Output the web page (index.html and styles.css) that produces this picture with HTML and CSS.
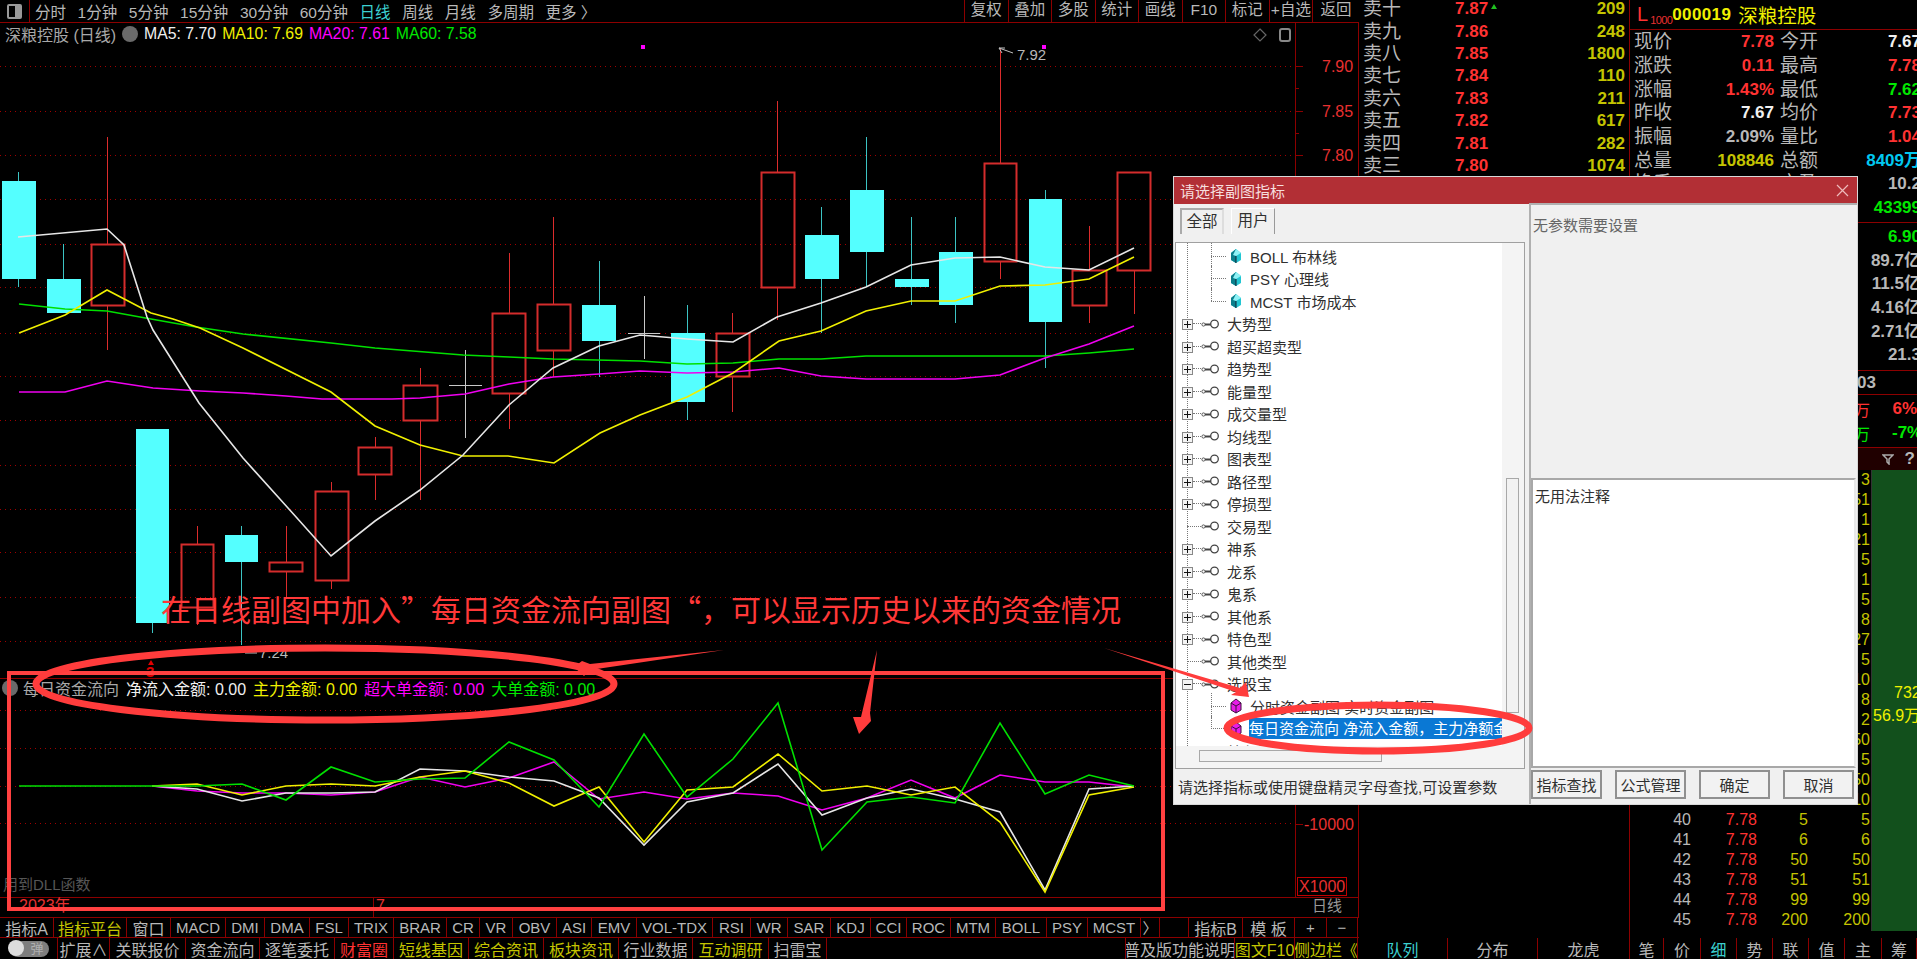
FILE: index.html
```html
<!DOCTYPE html>
<html lang="zh-CN">
<head>
    <meta charset="UTF-8">
    <title>深粮控股 日线</title>
    <link rel="stylesheet" href="styles.css">
</head>
<body>
    <!-- icons used by the tree -->
    <svg class="defs" width="0" height="0">
        <symbol id="key" viewBox="0 0 18 10">
            <circle cx="2.5" cy="5.5" r="1.6" fill="none" stroke="#555" stroke-width="1"/>
            <path d="M4 5.5h6" stroke="#444" stroke-width="2" fill="none"/>
            <circle cx="13.5" cy="5" r="3.8" stroke="#444" stroke-width="1.3" fill="#fff"/>
        </symbol>
        <symbol id="gem-cyan" viewBox="0 0 12 16">
            <path d="M6 1l5 4v7l-5 3-5-3V5z" fill="#22c6d2"/>
            <path d="M6 1L1 5v7l5 3z" fill="#0b7f8c"/>
            <path d="M6 1l5 4-5 3-3-1z" fill="#8ff2f6"/>
            <path d="M6 8v7" stroke="#123" stroke-width="1"/>
        </symbol>
        <symbol id="gem-pink" viewBox="0 0 12 16">
            <path d="M6 1l5 4v7l-5 3-5-3V5z" fill="#e81ce8" stroke="#401040" stroke-width="1"/>
            <path d="M1 5l5 3 5-3M6 8v7" stroke="#401040" stroke-width="1" fill="none"/>
        </symbol>
    </svg>

    <div class="workspace">
        <!-- left: chart -->
        <div class="chart-col">
            <div class="toolbar">
                <div class="panel-btn"><span class="panel-icon"></span></div>
                <div class="periods">
                    <span>分时</span><span>1分钟</span><span>5分钟</span><span>15分钟</span><span>30分钟</span><span>60分钟</span>
                    <span class="cyan">日线</span><span>周线</span><span>月线</span><span>多周期</span><span>更多 〉</span>
                </div>
                <div class="tools">
                    <span>复权</span><span>叠加</span><span>多股</span><span>统计</span><span>画线</span><span>F10</span><span>标记</span><span>+自选</span><span class="back">返回</span>
                </div>
            </div>

            <div class="chart">
                <svg class="chart-svg" width="1359" height="894" viewBox="0 23 1359 894">
                    <g class="grid">
                        <path d="M0 66.5H1295M0 111.5H1295M0 155.5H1295M0 199.5H1295M0 244.5H1295M0 287.5H1295M0 333.5H1295M0 376.5H1295M0 420.5H1295M0 465.5H1295M0 509.5H1295M0 552.5H1295M0 597.5H1295M0 641.5H1295"/>
                        <path d="M0 710.5H1295M0 748.5H1295M0 786.5H1295M0 823.5H1295"/>
                    </g>
                    <path class="frame" d="M1295.5 23V897M1358.5 0V917M0 678.5H1295M0 897.5H1359M373.5 897V917M1295 66.5h8M1295 88.5h4M1295 111.5h8M1295 133.5h4M1295 155.5h8M1295 824.5h8"/>

                    <!-- candles -->
                    <path class="wick-red" d="M107.5 137V244M107.5 305V350M197.5 526V544M197.5 607V625M286.5 526V562M286.5 571V597M331.5 482V491M331.5 580V589M375.5 437V447M375.5 474V500M420.5 368V385M420.5 420V500M509.5 253V313M509.5 393V429M553.5 217V304M553.5 350V377M732.5 313V333M732.5 376V412M777.5 101V172M777.5 287V320M1000.5 48V163M1000.5 261V279M1089.5 226V270M1089.5 305V323M1134.5 270V314"/>
                    <path class="wick-cyan" d="M18.5 172V181M18.5 279V287M63.5 244V279M152.5 623V633M241.5 526V535M241.5 562V645M599.5 261V305M599.5 341V377M687.5 305V333M687.5 402V420M821.5 207V235M821.5 279V333M866.5 137V190M866.5 252V287M911.5 217V279M911.5 287V305M955.5 217V252M955.5 305V323M1045.5 190V199M1045.5 322V368"/>
                    <path class="wick-white" d="M465.5 350V438M449 385.5H482M644.5 296V359M628 333.5H660"/>
                    <g class="body-cyan">
                        <rect x="2" y="181" width="34" height="98"/>
                        <rect x="47" y="279" width="34" height="34"/>
                        <rect x="136" y="429" width="33" height="194"/>
                        <rect x="225" y="535" width="33" height="27"/>
                        <rect x="582" y="305" width="34" height="36"/>
                        <rect x="671" y="333" width="34" height="69"/>
                        <rect x="805" y="235" width="34" height="44"/>
                        <rect x="850" y="190" width="34" height="62"/>
                        <rect x="895" y="279" width="34" height="8"/>
                        <rect x="939" y="252" width="34" height="53"/>
                        <rect x="1029" y="199" width="33" height="123"/>
                    </g>
                    <g class="body-red">
                        <rect x="91.5" y="244.5" width="33" height="61"/>
                        <rect x="181.5" y="544.5" width="32" height="63"/>
                        <rect x="269.5" y="562.5" width="33" height="9"/>
                        <rect x="315.5" y="491.5" width="33" height="89"/>
                        <rect x="358.5" y="447.5" width="33" height="27"/>
                        <rect x="403.5" y="385.5" width="34" height="35"/>
                        <rect x="492.5" y="313.5" width="33" height="80"/>
                        <rect x="537.5" y="304.5" width="33" height="46"/>
                        <rect x="716.5" y="333.5" width="33" height="43"/>
                        <rect x="761.5" y="172.5" width="33" height="115"/>
                        <rect x="984.5" y="163.5" width="32" height="98"/>
                        <rect x="1072.5" y="270.5" width="34" height="35"/>
                        <rect x="1117.5" y="172.5" width="33" height="98"/>
                    </g>

                    <!-- moving averages -->
                    <polyline class="line green" points="19,304 65,309 107,311 151,319 196,327 243,334 331,343 375,348 463,355 509,357 553,359 640,361 687,364 733,363 779,359 821,359 866,356 1045,356 1089,353 1134,349"/>
                    <polyline class="line pink" points="19,392 65,392 107,381 153,388 200,391 243,393 286,396 322,399 392,399 420,398 465,394 509,384 553,377 599,374 640,371 687,373 733,372 779,368 821,376 866,379 955,379 1000,375 1045,358 1089,344 1134,326"/>
                    <polyline class="line yellow" points="19,333 65,315 107,290 151,313 173,319 200,328 243,348 331,392 375,426 420,445 463,456 508,456 554,463 600,433 640,415 687,397 733,373 779,341 821,331 866,311 911,301 955,301 1000,286 1045,285 1089,279 1134,257"/>
                    <polyline class="line white" points="18,237 107,229 124,245 147,317 153,330 199,403 243,458 288,508 331,556 375,521 420,490 463,455 509,405 553,368 599,346 640,335 687,339 733,342 777,317 821,303 866,287 911,265 955,258 1000,257 1045,267 1089,270 1134,248"/>

                    <!-- sub chart lines -->
                    <polyline class="line pink" points="152,786 197,791 242,793 286,793 331,795 375,792 420,777 465,787 509,778 554,762 599,799 644,792 687,799 733,793 778,796 822,810 867,798 911,780 955,798 1000,775 1045,782 1089,782 1134,787"/>
                    <polyline class="line white" points="152,786 197,789 242,801 286,793 331,793 375,792 420,769 465,771 509,777 554,781 599,798 644,845 687,802 733,793 778,764 822,815 867,798 911,789 955,799 1000,812 1045,890 1089,789 1134,786"/>
                    <polyline class="line yellow" points="152,786 197,784 242,795 286,786 331,784 375,786 420,777 465,771 509,783 554,806 599,787 644,842 687,790 733,787 778,754 822,791 867,786 911,795 955,787 1000,822 1045,892 1089,795 1134,787"/>
                    <polyline class="line green" points="19,786 197,786 242,784 286,800 331,767 375,782 420,779 465,778 509,742 554,760 599,807 644,734 687,797 733,759 778,703 822,850 867,802 911,797 955,803 1000,723 1045,794 1089,775 1134,786"/>

                    <!-- marks on the chart -->
                    <rect class="dot" x="641" y="45" width="4" height="4"/>
                    <rect class="dot" x="1042" y="45" width="4" height="4"/>
                    <path class="callout" d="M1013 53L999 48M999 48l6 0M999 48l3 5"/>
                    <text class="price-note" x="1017" y="60">7.92</text>
                    <path class="callout" d="M257 653H245"/>
                    <text class="price-note" x="259" y="658">7.24</text>
                    <path class="marker" d="M151 660l3 5h-6z"/>
                    <text class="marker-num" x="146" y="677">3</text>
                    <path class="diamond" d="M1260 29l6 6-6 6-6-6z"/>
                    <rect class="side-icon" x="1280" y="29" width="10" height="12" rx="2"/>

                    <text class="axis" x="1322" y="72">7.90</text>
                    <text class="axis" x="1322" y="117">7.85</text>
                    <text class="axis" x="1322" y="161">7.80</text>
                    <text class="axis" x="1304" y="830">-10000</text>
                    <rect class="x-box" x="1297.5" y="877.5" width="49" height="18"/>
                    <text class="axis" x="1299" y="892">X1000</text>
                    <text class="axis dim" x="1312" y="911">日线</text>
                    <text class="axis" x="19" y="911">2023年</text>
                    <text class="axis" x="376" y="911">7</text>
                    <text class="dll-note" x="3" y="890">用到DLL函数</text>
                </svg>

                <div class="legend main-legend">
                    <span class="stock-name">深粮控股 (日线)</span>
                    <span class="round-btn"></span>
                    <span class="white">MA5: 7.70</span>
                    <span class="yellow">MA10: 7.69</span>
                    <span class="pink">MA20: 7.61</span>
                    <span class="green">MA60: 7.58</span>
                </div>
                <div class="legend sub-legend">
                    <span class="round-btn"></span>
                    <span class="stock-name">每日资金流向</span>
                    <span class="white">净流入金额: 0.00</span>
                    <span class="yellow">主力金额: 0.00</span>
                    <span class="pink">超大单金额: 0.00</span>
                    <span class="green">大单金额: 0.00</span>
                </div>
            </div>

            <div class="tabs-row indicator-tabs">
                <span class="cjk">指标A</span><span class="cjk olive">指标平台</span><span class="cjk">窗口</span><span>MACD</span><span>DMI</span><span>DMA</span><span>FSL</span><span>TRIX</span><span>BRAR</span><span>CR</span><span>VR</span><span>OBV</span><span>ASI</span><span>EMV</span><span>VOL-TDX</span><span>RSI</span><span>WR</span><span>SAR</span><span>KDJ</span><span>CCI</span><span>ROC</span><span>MTM</span><span>BOLL</span><span>PSY</span><span>MCST</span><span>〉</span><span></span><span class="cjk">指标B</span><span class="cjk">模 板</span><span>+</span><span>−</span>
            </div>
        </div>

        <!-- middle: order book -->
        <div class="book-col">
            <div class="ask-row"><span>卖十</span><b class="red">7.87<i class="up-mark"></i></b><b class="olive">209</b></div>
            <div class="ask-row"><span>卖九</span><b class="red">7.86</b><b class="olive">248</b></div>
            <div class="ask-row"><span>卖八</span><b class="red">7.85</b><b class="olive">1800</b></div>
            <div class="ask-row"><span>卖七</span><b class="red">7.84</b><b class="olive">110</b></div>
            <div class="ask-row"><span>卖六</span><b class="red">7.83</b><b class="olive">211</b></div>
            <div class="ask-row"><span>卖五</span><b class="red">7.82</b><b class="olive">617</b></div>
            <div class="ask-row"><span>卖四</span><b class="red">7.81</b><b class="olive">282</b></div>
            <div class="ask-row"><span>卖三</span><b class="red">7.80</b><b class="olive">1074</b></div>
        </div>

        <!-- right: quote panel -->
        <div class="quote-col">
            <div class="quote-head">
                <span class="l-mark">L</span><span class="l-size">1000</span>
                <b class="code">000019</b><span class="name">深粮控股</span>
            </div>
            <div class="quote-block first">
                <div class="quote-row"><span>现价</span><b class="red">7.78</b><span>今开</span><b class="white">7.67</b></div>
                <div class="quote-row"><span>涨跌</span><b class="red">0.11</b><span>最高</span><b class="red">7.78</b></div>
                <div class="quote-row"><span>涨幅</span><b class="red">1.43%</b><span>最低</span><b class="green">7.62</b></div>
                <div class="quote-row"><span>昨收</span><b class="white">7.67</b><span>均价</span><b class="red">7.73</b></div>
                <div class="quote-row"><span>振幅</span><b>2.09%</b><span>量比</span><b class="red">1.04</b></div>
                <div class="quote-row"><span>总量</span><b class="olive">108846</b><span>总额</span><b class="blue">8409万</b></div>
                <div class="quote-row"><span>换手</span><b></b><span>市盈</span><b>10.2</b></div>
                <div class="quote-row"><span></span><b></b><span></span><b class="green">43399</b></div>
            </div>
            <div class="quote-block second">
                <div class="quote-row"><span></span><b></b><span></span><b class="green">6.90</b></div>
                <div class="quote-row"><span></span><b></b><span></span><b>89.7亿</b></div>
                <div class="quote-row"><span></span><b></b><span></span><b>11.5亿</b></div>
                <div class="quote-row"><span></span><b></b><span></span><b>4.16亿</b></div>
                <div class="quote-row"><span></span><b></b><span></span><b>2.71亿</b></div>
                <div class="quote-row"><span></span><b></b><span></span><b>21.3</b></div>
            </div>
            <div class="time-row"><b>1003</b></div>
            <div class="quote-block third">
                <div class="flow-row"><span class="red">100万</span><b class="red">6%</b></div>
                <div class="flow-row"><span class="green">100万</span><b class="green">-7%</b></div>
            </div>
            <div class="filter-bar">
                <svg width="12" height="12" viewBox="0 0 12 12"><path d="M1 2h10L7 6v5L5 9V6z" fill="none" stroke="#aaa" stroke-width="1.5"/></svg>
                <b>?</b>
            </div>
            <div class="tick-area">
                <div class="ticks">
                    <div class="tick"><span></span><span></span><span></span><span class="olive">3</span></div>
                    <div class="tick"><span></span><span></span><span></span><span class="olive">51</span></div>
                    <div class="tick"><span></span><span></span><span></span><span class="olive">1</span></div>
                    <div class="tick"><span></span><span></span><span></span><span class="olive">21</span></div>
                    <div class="tick"><span></span><span></span><span></span><span class="olive">5</span></div>
                    <div class="tick"><span></span><span></span><span></span><span class="olive">1</span></div>
                    <div class="tick"><span></span><span></span><span></span><span class="olive">5</span></div>
                    <div class="tick"><span></span><span></span><span></span><span class="olive">8</span></div>
                    <div class="tick"><span></span><span></span><span></span><span class="olive">27</span></div>
                    <div class="tick"><span></span><span></span><span></span><span class="olive">5</span></div>
                    <div class="tick"><span></span><span></span><span></span><span class="olive">10</span></div>
                    <div class="tick"><span></span><span></span><span></span><span class="olive">8</span></div>
                    <div class="tick"><span></span><span></span><span></span><span class="olive">2</span></div>
                    <div class="tick"><span></span><span></span><span></span><span class="olive">50</span></div>
                    <div class="tick"><span></span><span></span><span></span><span class="olive">5</span></div>
                    <div class="tick"><span></span><span></span><span></span><span class="olive">50</span></div>
                    <div class="tick"><span></span><span></span><span></span><span class="olive">10</span></div>
                    <div class="tick"><span>40</span><span class="red">7.78</span><span class="olive">5</span><span class="olive">5</span></div>
                    <div class="tick"><span>41</span><span class="red">7.78</span><span class="olive">6</span><span class="olive">6</span></div>
                    <div class="tick"><span>42</span><span class="red">7.78</span><span class="olive">50</span><span class="olive">50</span></div>
                    <div class="tick"><span>43</span><span class="red">7.78</span><span class="olive">51</span><span class="olive">51</span></div>
                    <div class="tick"><span>44</span><span class="red">7.78</span><span class="olive">99</span><span class="olive">99</span></div>
                    <div class="tick"><span>45</span><span class="red">7.78</span><span class="olive">200</span><span class="olive">200</span></div>
                </div>
                <div class="depth-panel">
                    <span class="depth-num">732</span>
                    <span class="depth-sum">56.9万</span>
                </div>
            </div>
        </div>
    </div>

    <!-- bottom row -->
    <div class="tabs-row status-tabs">
        <span class="toggle"><i class="knob"></i><em>弹</em></span><span>扩展∧</span><span>关联报价</span><span>资金流向</span><span>逐笔委托</span><span class="red">财富圈</span><span class="olive">短线基因</span><span class="olive">综合资讯</span><span class="olive">板块资讯</span><span>行业数据</span><span class="olive">互动调研</span><span>扫雷宝</span><span></span><span>普及版功能说明</span><span class="olive">图文F10</span><span class="olive">侧边栏《</span><span class="cyan">队列</span><span>分布</span><span>龙虎</span><span>笔</span><span>价</span><span class="cyan">细</span><span>势</span><span>联</span><span>值</span><span>主</span><span>筹</span>
    </div>

    <!-- indicator dialog -->
    <div class="dialog">
        <div class="dialog-title">
            <span>请选择副图指标</span>
            <svg width="13" height="13" viewBox="0 0 13 13"><path d="M1 1l11 11M12 1L1 12" stroke="#eebbbb" stroke-width="1.2"/></svg>
        </div>
        <div class="dialog-body">
            <div class="dialog-left">
                <div class="dialog-tabs">
                    <span class="dialog-tab active">全部</span>
                    <span class="dialog-tab">用户</span>
                </div>
                <div class="tree-box">
                    <div class="tree-top">
                        <div class="tree-list">
                            <div class="leaf"><i class="stub"></i><svg class="gem"><use href="#gem-cyan"/></svg><span>BOLL 布林线</span></div>
                            <div class="leaf"><i class="stub"></i><svg class="gem"><use href="#gem-cyan"/></svg><span>PSY 心理线</span></div>
                            <div class="leaf last"><i class="stub"></i><svg class="gem"><use href="#gem-cyan"/></svg><span>MCST 市场成本</span></div>
                            <div class="group"><i class="exp plus"></i><i class="dash"></i><svg class="key"><use href="#key"/></svg><span>大势型</span></div>
                            <div class="group"><i class="exp plus"></i><i class="dash"></i><svg class="key"><use href="#key"/></svg><span>超买超卖型</span></div>
                            <div class="group"><i class="exp plus"></i><i class="dash"></i><svg class="key"><use href="#key"/></svg><span>趋势型</span></div>
                            <div class="group"><i class="exp plus"></i><i class="dash"></i><svg class="key"><use href="#key"/></svg><span>能量型</span></div>
                            <div class="group"><i class="exp plus"></i><i class="dash"></i><svg class="key"><use href="#key"/></svg><span>成交量型</span></div>
                            <div class="group"><i class="exp plus"></i><i class="dash"></i><svg class="key"><use href="#key"/></svg><span>均线型</span></div>
                            <div class="group"><i class="exp plus"></i><i class="dash"></i><svg class="key"><use href="#key"/></svg><span>图表型</span></div>
                            <div class="group"><i class="exp plus"></i><i class="dash"></i><svg class="key"><use href="#key"/></svg><span>路径型</span></div>
                            <div class="group"><i class="exp plus"></i><i class="dash"></i><svg class="key"><use href="#key"/></svg><span>停损型</span></div>
                            <div class="group nobox"><i class="dash wide"></i><svg class="key"><use href="#key"/></svg><span>交易型</span></div>
                            <div class="group"><i class="exp plus"></i><i class="dash"></i><svg class="key"><use href="#key"/></svg><span>神系</span></div>
                            <div class="group"><i class="exp plus"></i><i class="dash"></i><svg class="key"><use href="#key"/></svg><span>龙系</span></div>
                            <div class="group"><i class="exp plus"></i><i class="dash"></i><svg class="key"><use href="#key"/></svg><span>鬼系</span></div>
                            <div class="group"><i class="exp plus"></i><i class="dash"></i><svg class="key"><use href="#key"/></svg><span>其他系</span></div>
                            <div class="group"><i class="exp plus"></i><i class="dash"></i><svg class="key"><use href="#key"/></svg><span>特色型</span></div>
                            <div class="group nobox"><i class="dash wide"></i><svg class="key"><use href="#key"/></svg><span>其他类型</span></div>
                            <div class="group"><i class="exp"></i><i class="dash"></i><svg class="key"><use href="#key"/></svg><span>选股宝</span></div>
                            <div class="leaf"><i class="stub"></i><svg class="gem"><use href="#gem-pink"/></svg><span>分时资金副图 实时资金副图</span></div>
                            <div class="leaf last selected"><i class="stub"></i><svg class="gem"><use href="#gem-pink"/></svg><span>每日资金流向 净流入金额，主力净额金额</span></div>
                            <div class="group"><i class="exp plus"></i><i class="dash"></i><svg class="key"><use href="#key"/></svg><span>特色指标</span></div>
                        </div>
                        <div class="vscroll"><div class="vthumb"></div></div>
                    </div>
                    <div class="hscroll"><div class="hthumb"></div></div>
                </div>
                <div class="dialog-status">请选择指标或使用键盘精灵字母查找,可设置参数</div>
            </div>
            <div class="dialog-right">
                <div class="params">无参数需要设置</div>
                <div class="notes">无用法注释</div>
                <div class="dialog-buttons">
                    <button>指标查找</button>
                    <button>公式管理</button>
                    <button>确定</button>
                    <button>取消</button>
                </div>
            </div>
        </div>
    </div>

    <!-- red marks drawn on top of the screenshot -->
    <svg class="marks" width="1917" height="959" viewBox="0 0 1917 959">
        <rect class="mark-rect" x="9" y="673" width="1154" height="236"/>
        <ellipse class="mark-oval" cx="325" cy="684" rx="289" ry="36"/>
        <ellipse class="mark-oval" cx="1378" cy="728" rx="151" ry="23"/>
        <polygon class="mark-arrow" points="724,650 590,670 584,676 574,667 582,661 590,664"/>
        <polygon class="mark-arrow" points="877,650 870,713 871,721 859,734 853,717 861,717"/>
        <polygon class="mark-arrow" points="1104,648 1240,688 1246,682 1249,697 1231,695 1236,692"/>
    </svg>
    <div class="mark-text">在日线副图中加入”每日资金流向副图“，可以显示历史以来的资金情况</div>
</body>
</html>
```

FILE: styles.css
```css
body {
    margin: 0;
    width: 1917px;
    height: 959px;
    overflow: hidden;
    position: relative;
    background-color: #000;
    color: #b8b8b8;
    font-family: "Liberation Sans", "Noto Sans CJK SC", sans-serif;
    font-size: 15px;
}

.defs {
    position: absolute;
}

/* colours shared by text */
.white { color: #f0f0f0; }
.yellow { color: #f0f000; }
.pink { color: #ff00ff; }
.green { color: #00e800; }
.red { color: #ff3232; }
.cyan { color: #3cd0d0; }
.olive { color: #c4c400; }
.blue { color: #00c8f0; }

.workspace {
    display: flex;
    height: 938px;
}

/* left column */
.chart-col {
    width: 1359px;
    flex: none;
    display: flex;
    flex-direction: column;
}

.toolbar {
    height: 22px;
    display: flex;
    align-items: center;
    border-bottom: 1px solid #8c0000;
    white-space: nowrap;
    font-size: 15.5px;
}

.panel-btn {
    width: 29px;
    height: 22px;
    border-right: 1px solid #8c0000;
    display: flex;
    align-items: center;
    justify-content: center;
}

.panel-icon {
    width: 11px;
    height: 11px;
    border: 2px solid #999;
    border-radius: 2px;
    background: linear-gradient(90deg, #000 55%, #999 55%);
}

.periods {
    display: flex;
    gap: 11.6px;
    margin-left: 5px;
    flex: 1;
}

.tools {
    display: flex;
    width: 395px;
    height: 22px;
}

.tools span {
    flex: 1;
    text-align: center;
    line-height: 20px;
    border-left: 1px solid #8c0000;
}

.tools .back {
    flex: 1.08;
}

.chart {
    position: relative;
    height: 894px;
}

.chart-svg {
    display: block;
}

.grid path {
    stroke: #a00000;
    stroke-width: 1;
    stroke-dasharray: 1 4;
    fill: none;
}

.frame {
    stroke: #8c0000;
    stroke-width: 1;
    fill: none;
}

.wick-red { stroke: #dc2c2c; stroke-width: 1; fill: none; }
.wick-cyan { stroke: #3cc4c4; stroke-width: 1; fill: none; }
.wick-white { stroke: #c8c8c8; stroke-width: 1; fill: none; }
.body-cyan rect { fill: #54ffff; }
.body-red rect { fill: none; stroke: #d42c2c; stroke-width: 2; }

.line {
    fill: none;
    stroke-width: 1.6;
}

.line.white { stroke: #e6e6e6; }
.line.yellow { stroke: #f0f000; }
.line.pink { stroke: #f000f0; }
.line.green { stroke: #00e000; }

.dot { fill: #ff00ff; }
.callout { stroke: #c0c0c0; stroke-width: 1; fill: none; }
.price-note { fill: #b8b8b8; font-size: 15px; }
.marker { fill: #e00000; }
.marker-num { fill: #e00000; font-size: 15px; font-weight: bold; }
.diamond { fill: none; stroke: #666; stroke-width: 1.2; }
.side-icon { fill: none; stroke: #888; stroke-width: 2; }
.axis { fill: #e83030; font-size: 16px; }
.axis.dim { fill: #999; font-size: 15px; }
.x-box { fill: none; stroke: #c00000; stroke-width: 1; }
.dll-note { fill: #565656; font-size: 15px; }

.legend {
    position: absolute;
    display: flex;
    align-items: center;
    white-space: nowrap;
    height: 20px;
}

.main-legend {
    left: 5px;
    top: 1px;
    gap: 6px;
    font-size: 15.8px;
}

.sub-legend {
    left: 2px;
    top: 655px;
    gap: 7px;
    font-size: 16px;
}

.sub-legend .round-btn {
    margin-right: -2px;
}

.stock-name {
    color: #a8a8a8;
    font-size: 16px;
}

.round-btn {
    width: 16px;
    height: 16px;
    border-radius: 50%;
    background-color: #6a6a6a;
    flex: none;
}

/* both tab rows */
.tabs-row {
    display: grid;
    height: 21px;
    border-top: 1px solid #8c0000;
    box-sizing: border-box;
    white-space: nowrap;
    overflow: hidden;
}

.tabs-row span {
    display: flex;
    align-items: center;
    justify-content: center;
    border-right: 1px solid #8c0000;
    box-sizing: border-box;
    overflow: hidden;
}

.tabs-row .cjk {
    font-size: 16px;
}

.indicator-tabs {
    grid-template-columns: 54px 73px 44px 55px 39px 45px 39px 45px 53px 33px 33px 44px 35px 45px 76px 38px 37px 43px 40px 36px 44px 45px 51px 41px 53px 19px 29px 54px 52px 32px 31px;
    border-bottom: 1px solid #8c0000;
    height: 22px;
}

.status-tabs {
    grid-template-columns: 58px 52px 76px 74px 75px 59px 75px 75px 75px 74px 76px 58px 299px 109px 60px 63px 90px 90px 92px 34px 37px 36px 36px 36px 36px 37px 35px;
    border-top: none;
    font-size: 16px;
}

.toggle {
    position: relative;
}

.knob {
    position: absolute;
    z-index: 1;
    left: 8px;
    top: 2px;
    width: 16px;
    height: 16px;
    border-radius: 50%;
    background-color: #ddd;
}

.toggle em {
    width: 39px;
    height: 16px;
    margin-left: 1px;
    border-radius: 8px;
    background-color: #7e7e7e;
    color: #b0b0b0;
    font-style: normal;
    font-size: 13px;
    line-height: 16px;
    text-align: right;
    padding-right: 5px;
    box-sizing: border-box;
}

/* order book */
.book-col {
    width: 271px;
    flex: none;
    box-sizing: border-box;
    padding-top: 0;
    margin-top: -2px;
    border-right: 1px solid #8c0000;
    overflow: hidden;
}

.ask-row {
    display: grid;
    grid-template-columns: 96px 60px 110px;
    height: 22.4px;
    align-items: center;
    line-height: 22px;
    font-size: 17px;
}

.ask-row span {
    font-size: 19px;
    padding-left: 4px;
}

.ask-row b:last-child {
    text-align: right;
}

.up-mark {
    display: inline-block;
    width: 0;
    height: 0;
    margin-left: 3px;
    vertical-align: 5px;
    border: 3px solid transparent;
    border-bottom: 5px solid #20c020;
    border-top: none;
}

/* quote panel */
.quote-col {
    flex: 1;
    overflow: hidden;
    font-size: 17px;
}

.quote-head {
    height: 29px;
    display: flex;
    align-items: center;
    padding-left: 7px;
    border-bottom: 1px solid #8c0000;
    white-space: nowrap;
}

.l-mark {
    color: #ff3232;
    font-size: 20px;
}

.l-size {
    color: #e83030;
    font-size: 11px;
    margin: 10px 0 0 2px;
    letter-spacing: -0.6px;
}

.code {
    color: #f0f000;
    font-size: 17px;
    letter-spacing: 0.4px;
}

.name {
    color: #f0f000;
    font-size: 19.5px;
    margin-left: 7px;
}

.quote-block {
    border-bottom: 1px solid #8c0000;
}

.quote-block.first {
    padding-bottom: 2px;
}

.quote-block.second {
    padding: 2px 0 3px;
}

.quote-block.third {
    padding: 2px 0;
}

.quote-row {
    display: grid;
    grid-template-columns: 40px 100px 46px 101px;
    width: 291px;
    padding-left: 4px;
    height: 23.7px;
    align-items: center;
    line-height: 23px;
}

.quote-row span {
    font-size: 19px;
}

.quote-row span:nth-child(3) {
    padding-left: 6px;
}

.quote-row b {
    text-align: right;
}

.time-row {
    height: 23px;
    line-height: 23px;
    text-align: right;
    padding-right: 41px;
    border-bottom: 1px solid #8c0000;
}

.flow-row {
    display: flex;
    justify-content: flex-end;
    align-items: center;
    height: 24px;
}

.flow-row span {
    font-size: 16px;
    margin-right: 22px;
}

.flow-row b {
    width: 25px;
    text-align: right;
}

.filter-bar {
    height: 22px;
    background-color: #200000;
    display: flex;
    align-items: center;
    justify-content: flex-end;
    gap: 11px;
    padding-right: 2px;
}

.tick-area {
    display: flex;
    height: 461px;
}

.ticks {
    width: 240px;
    flex: none;
}

.tick {
    display: grid;
    grid-template-columns: 61px 66px 51px 62px;
    height: 20px;
    line-height: 20px;
    font-size: 16px;
    text-align: right;
}

.depth-panel {
    flex: 1;
    margin-left: 1px;
    background-color: #12501c;
    border-left: 1px solid #333;
    box-sizing: border-box;
    color: #f0f000;
    font-size: 16px;
    white-space: nowrap;
    position: relative;
}

.depth-num {
    position: absolute;
    left: 22px;
    top: 214px;
}

.depth-sum {
    position: absolute;
    left: 1px;
    top: 232px;
}

/* dialog sits over everything else */
.dialog {
    position: absolute;
    left: 1174px;
    top: 177px;
    width: 683px;
    height: 627px;
    display: flex;
    flex-direction: column;
    background-color: #f0f0f0;
    color: #303030;
    box-shadow: 0 0 0 1px #d8d8d8;
}

.dialog-title {
    height: 27px;
    flex: none;
    background-color: #b22f35;
    color: #f6dede;
    display: flex;
    align-items: center;
    justify-content: space-between;
    padding: 0 8px 0 6px;
}

.dialog-body {
    flex: 1;
    display: flex;
}

.dialog-left {
    width: 355px;
    flex: none;
    display: flex;
    flex-direction: column;
}

.dialog-tabs {
    height: 38px;
    box-sizing: border-box;
    padding: 4px 0 0 6px;
    display: flex;
    gap: 7px;
    font-size: 15.5px;
}

.dialog-tab {
    width: 44px;
    height: 26px;
    box-sizing: border-box;
    text-align: center;
    line-height: 24px;
    border: 1px solid #fff;
    border-right-color: #999;
    border-bottom: none;
}

.dialog-tab.active {
    border: 2px solid #aaa;
    border-bottom: none;
    border-right-color: #ddd;
}

.tree-box {
    height: 527px;
    margin-left: 1px;
    width: 350px;
    box-sizing: border-box;
    border: 1px solid #a0a0a0;
    background-color: #f4f4f4;
    flex: none;
}

.tree-top {
    display: flex;
    height: 503px;
}

.tree-list {
    width: 326px;
    flex: none;
    padding-top: 2px;
    box-sizing: border-box;
    background-color: #fff;
    overflow: hidden;
    position: relative;
    font-size: 15px;
}

.tree-list::before {
    content: "";
    position: absolute;
    left: 11px;
    top: 0;
    bottom: 0;
    border-left: 1px dotted #777;
}

.leaf,
.group {
    display: flex;
    align-items: center;
    height: 22.5px;
    white-space: nowrap;
    position: relative;
}

.group {
    padding-left: 6px;
}

.group.nobox {
    padding-left: 11px;
}

.exp {
    width: 11px;
    height: 11px;
    box-sizing: border-box;
    border: 1px solid #888;
    background: linear-gradient(#111, #111) center / 7px 1px no-repeat #f4f4f4;
    flex: none;
    position: relative;
    z-index: 1;
    margin-top: 2px;
}

.exp.plus {
    background:
        linear-gradient(#111, #111) center / 7px 1px no-repeat,
        linear-gradient(#111, #111) center / 1px 7px no-repeat,
        #f4f4f4;
}

.dash {
    width: 8px;
    border-bottom: 1px dotted #777;
    flex: none;
}

.dash.wide {
    width: 14px;
}

.key {
    width: 18px;
    height: 10px;
    margin-right: 8px;
    flex: none;
}

.leaf {
    padding-left: 35px;
}

.leaf::before {
    content: "";
    position: absolute;
    left: 35px;
    top: -2px;
    bottom: 0;
    border-left: 1px dotted #777;
}

.leaf.last::before {
    bottom: 50%;
}

.stub {
    width: 15px;
    border-bottom: 1px dotted #777;
    flex: none;
}

.gem {
    width: 12px;
    height: 16px;
    margin: 0 8px 0 4px;
    flex: none;
}

.leaf.selected span {
    background-color: #0a78d4;
    color: #fff;
    flex: 1;
    min-width: 0;
    overflow: hidden;
    line-height: 21px;
    margin-left: -1px;
}

.vscroll {
    flex: 1;
    padding: 235px 5px 0 4px;
}

.vthumb {
    height: 235px;
    box-sizing: border-box;
    border: 1px solid #a8a8a8;
    background-color: #f2f2f2;
}

.hscroll {
    padding: 4px 0 0 23px;
}

.hthumb {
    width: 183px;
    height: 12px;
    box-sizing: border-box;
    border: 1px solid #a8a8a8;
    background-color: #f2f2f2;
}

.dialog-status {
    flex: 1;
    display: flex;
    align-items: center;
    padding-left: 4px;
    font-size: 15px;
    white-space: nowrap;
}

.dialog-right {
    flex: 1;
    display: flex;
    flex-direction: column;
    border-top: 2px solid #b0b0b0;
    border-left: 2px solid #b0b0b0;
    margin-top: -1px;
}

.params {
    height: 273px;
    box-sizing: border-box;
    padding: 9px 0 0 2px;
    color: #666;
    font-size: 15px;
}

.notes {
    height: 290px;
    box-sizing: border-box;
    padding: 5px 2px;
    background-color: #fff;
    border: 2px solid #a8a8a8;
    border-right-color: #e8e8e8;
    font-size: 15px;
    margin-right: 1px;
}

.dialog-buttons {
    display: flex;
    gap: 13px;
    padding-top: 2px;
}

.dialog-buttons button {
    width: 71px;
    height: 29px;
    padding: 0;
    background-color: #f2f2f2;
    border: 2px solid #909090;
    color: #303030;
    font-family: inherit;
    font-size: 15px;
}

/* hand drawn red marks */
.marks {
    position: absolute;
    left: 0;
    top: 0;
    pointer-events: none;
}

.mark-rect {
    fill: none;
    stroke: #ff4040;
    stroke-width: 4;
}

.mark-oval {
    fill: none;
    stroke: #ff3c3c;
    stroke-width: 7;
}

.mark-arrow {
    fill: #ff3c3c;
}

.mark-text {
    position: absolute;
    left: 161px;
    top: 586px;
    color: #ff3838;
    font-family: "Noto Sans CJK SC", sans-serif;
    font-size: 30px;
    line-height: 44px;
    white-space: pre;
}
```
